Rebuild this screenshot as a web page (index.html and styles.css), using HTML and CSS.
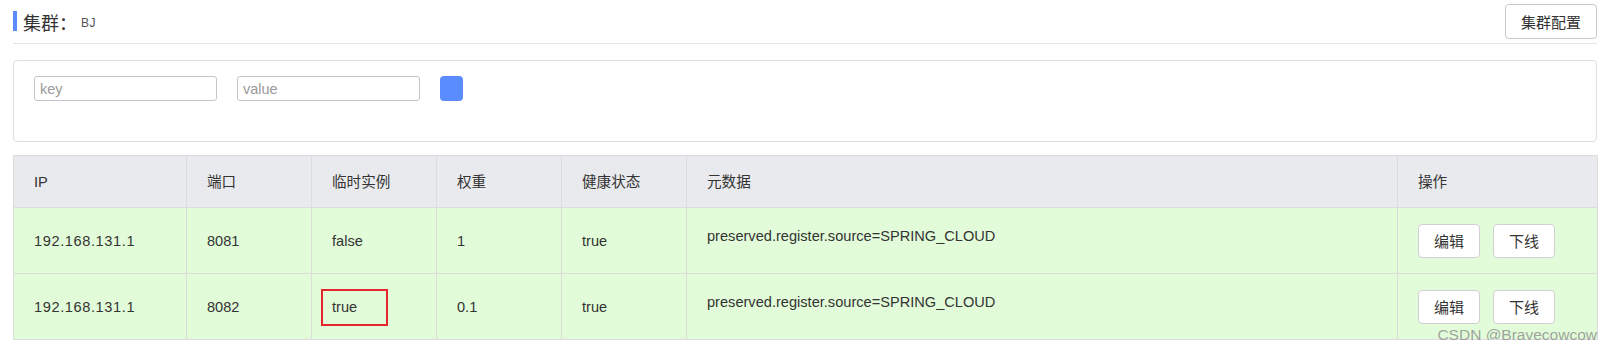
FILE: index.html
```html
<!DOCTYPE html>
<html lang="zh-CN">
<head>
<meta charset="utf-8">
<title>集群 BJ</title>
<link rel="stylesheet" href="styles.css">
</head>
<body>
<div class="page">
  <div class="titlebar">
    <div class="title">
      <span class="title-mark"></span>
      <span class="title-text">集群：</span>
      <span class="title-name">BJ</span>
    </div>
    <button class="btn btn-config">集群配置</button>
  </div>

  <div class="filter">
    <input class="field" type="text" placeholder="key">
    <input class="field" type="text" placeholder="value">
    <button class="btn-blue" aria-label="搜索"></button>
  </div>

  <div class="table-wrap">
    <table class="grid">
      <colgroup>
        <col class="c-ip">
        <col class="c-port">
        <col class="c-eph">
        <col class="c-weight">
        <col class="c-health">
        <col class="c-meta">
        <col class="c-op">
      </colgroup>
      <thead>
        <tr>
          <th>IP</th>
          <th>端口</th>
          <th>临时实例</th>
          <th>权重</th>
          <th>健康状态</th>
          <th>元数据</th>
          <th>操作</th>
        </tr>
      </thead>
      <tbody>
        <tr>
          <td class="ip">192.168.131.1</td>
          <td>8081</td>
          <td>false</td>
          <td>1</td>
          <td>true</td>
          <td class="meta">preserved.register.source=SPRING_CLOUD</td>
          <td class="ops"><button class="btn btn-row">编辑</button><button class="btn btn-row">下线</button></td>
        </tr>
        <tr>
          <td class="ip">192.168.131.1</td>
          <td>8082</td>
          <td><span class="marked">true</span></td>
          <td>0.1</td>
          <td>true</td>
          <td class="meta">preserved.register.source=SPRING_CLOUD</td>
          <td class="ops"><button class="btn btn-row">编辑</button><button class="btn btn-row">下线</button></td>
        </tr>
      </tbody>
    </table>
    <div class="watermark">CSDN @Bravecowcow</div>
  </div>
</div>
</body>
</html>
```

FILE: styles.css
```css
*, *::before, *::after { box-sizing: border-box; }

html, body {
  margin: 0;
  padding: 0;
  background: #ffffff;
}

body {
  font-family: "Liberation Sans", Arial, "Noto Sans CJK SC", sans-serif;
  color: #333333;
  font-size: 14.6px;
}

.page {
  padding: 0 16px 0 13px;
}

/* title bar */
.titlebar {
  display: flex;
  align-items: center;
  justify-content: space-between;
  padding: 4px 0 4px 0;
  border-bottom: 1px solid #e5e5e5;
}

.title {
  display: flex;
  align-items: center;
  height: 35px;
}

.title-mark {
  width: 4px;
  height: 20px;
  background: #5b8cff;
  margin-right: 6px;
  margin-top: -1px;
}

.title-text {
  font-family: "Noto Sans CJK SC", "Liberation Sans", sans-serif;
  font-size: 18px;
  color: #333;
  line-height: 20px;
}

.title-name {
  font-size: 12px;
  color: #555;
  margin-left: 4px;
  margin-top: 2px;
  letter-spacing: 0.5px;
}

.btn {
  font-family: "Liberation Sans", "Noto Sans CJK SC", sans-serif;
  background: #ffffff;
  border: 1px solid #c8c8cc;
  border-radius: 4px;
  color: #333;
  padding: 0;
  cursor: pointer;
}

.btn-config {
  width: 92px;
  height: 35px;
  font-size: 15px;
}

/* filter */
.filter {
  margin-top: 16px;
  height: 82px;
  border: 1px solid #dedee2;
  border-radius: 4px;
  padding: 15px 20px 0 20px;
  display: flex;
  align-items: flex-start;
  gap: 20px;
}

.field {
  width: 183px;
  height: 25px;
  border: 1px solid #c4c4cc;
  border-radius: 3px;
  padding: 0 5px;
  font-family: "Liberation Sans", "Noto Sans CJK SC", sans-serif;
  font-size: 14.5px;
  color: #333;
  outline: none;
}

.field::placeholder {
  color: #9a9a9a;
}

.btn-blue {
  width: 23px;
  height: 25px;
  border: none;
  border-radius: 4px;
  background: #5a8bff;
  padding: 0;
}

/* table */
.table-wrap {
  position: relative;
  margin-top: 13px;
}

.grid {
  width: 1584px;
  border-collapse: collapse;
  table-layout: fixed;
  border: 1px solid #dcdcdc;
}

.c-ip { width: 173px; }
.c-port { width: 125px; }
.c-eph { width: 125px; }
.c-weight { width: 125px; }
.c-health { width: 125px; }
.c-meta { width: 711px; }
.c-op { width: 200px; }

.grid th,
.grid td {
  border: 1px solid #dcdcdc;
  text-align: left;
  padding: 0 0 0 20px;
  font-weight: normal;
  vertical-align: middle;
  line-height: 20px;
}

.grid thead tr {
  height: 52px;
}

.grid th {
  background: #e9eaee;
  color: #333;
}

.grid tbody tr {
  height: 66px;
}

.grid td {
  background: #e2fcd9;
  color: #333;
}

.grid td.ip {
  letter-spacing: 0.6px;
}

.grid td.meta {
  vertical-align: top;
  padding-top: 18px;
}

.ops {
  white-space: nowrap;
}

.btn-row {
  width: 62px;
  height: 34px;
  font-size: 15px;
  margin-right: 13px;
  border-color: #cfcfd4;
  vertical-align: middle;
}

.marked {
  position: relative;
  display: inline-block;
}

.marked::after {
  content: "";
  position: absolute;
  left: -11px;
  top: 50%;
  width: 67px;
  height: 37px;
  margin-top: -18px;
  border: 2px solid #e5262c;
}

.watermark {
  position: absolute;
  right: 0;
  bottom: -3px;
  font-family: "Liberation Sans", Arial, sans-serif;
  font-size: 15.5px;
  color: rgba(140, 140, 140, 0.8);
  line-height: 16px;
}
```
